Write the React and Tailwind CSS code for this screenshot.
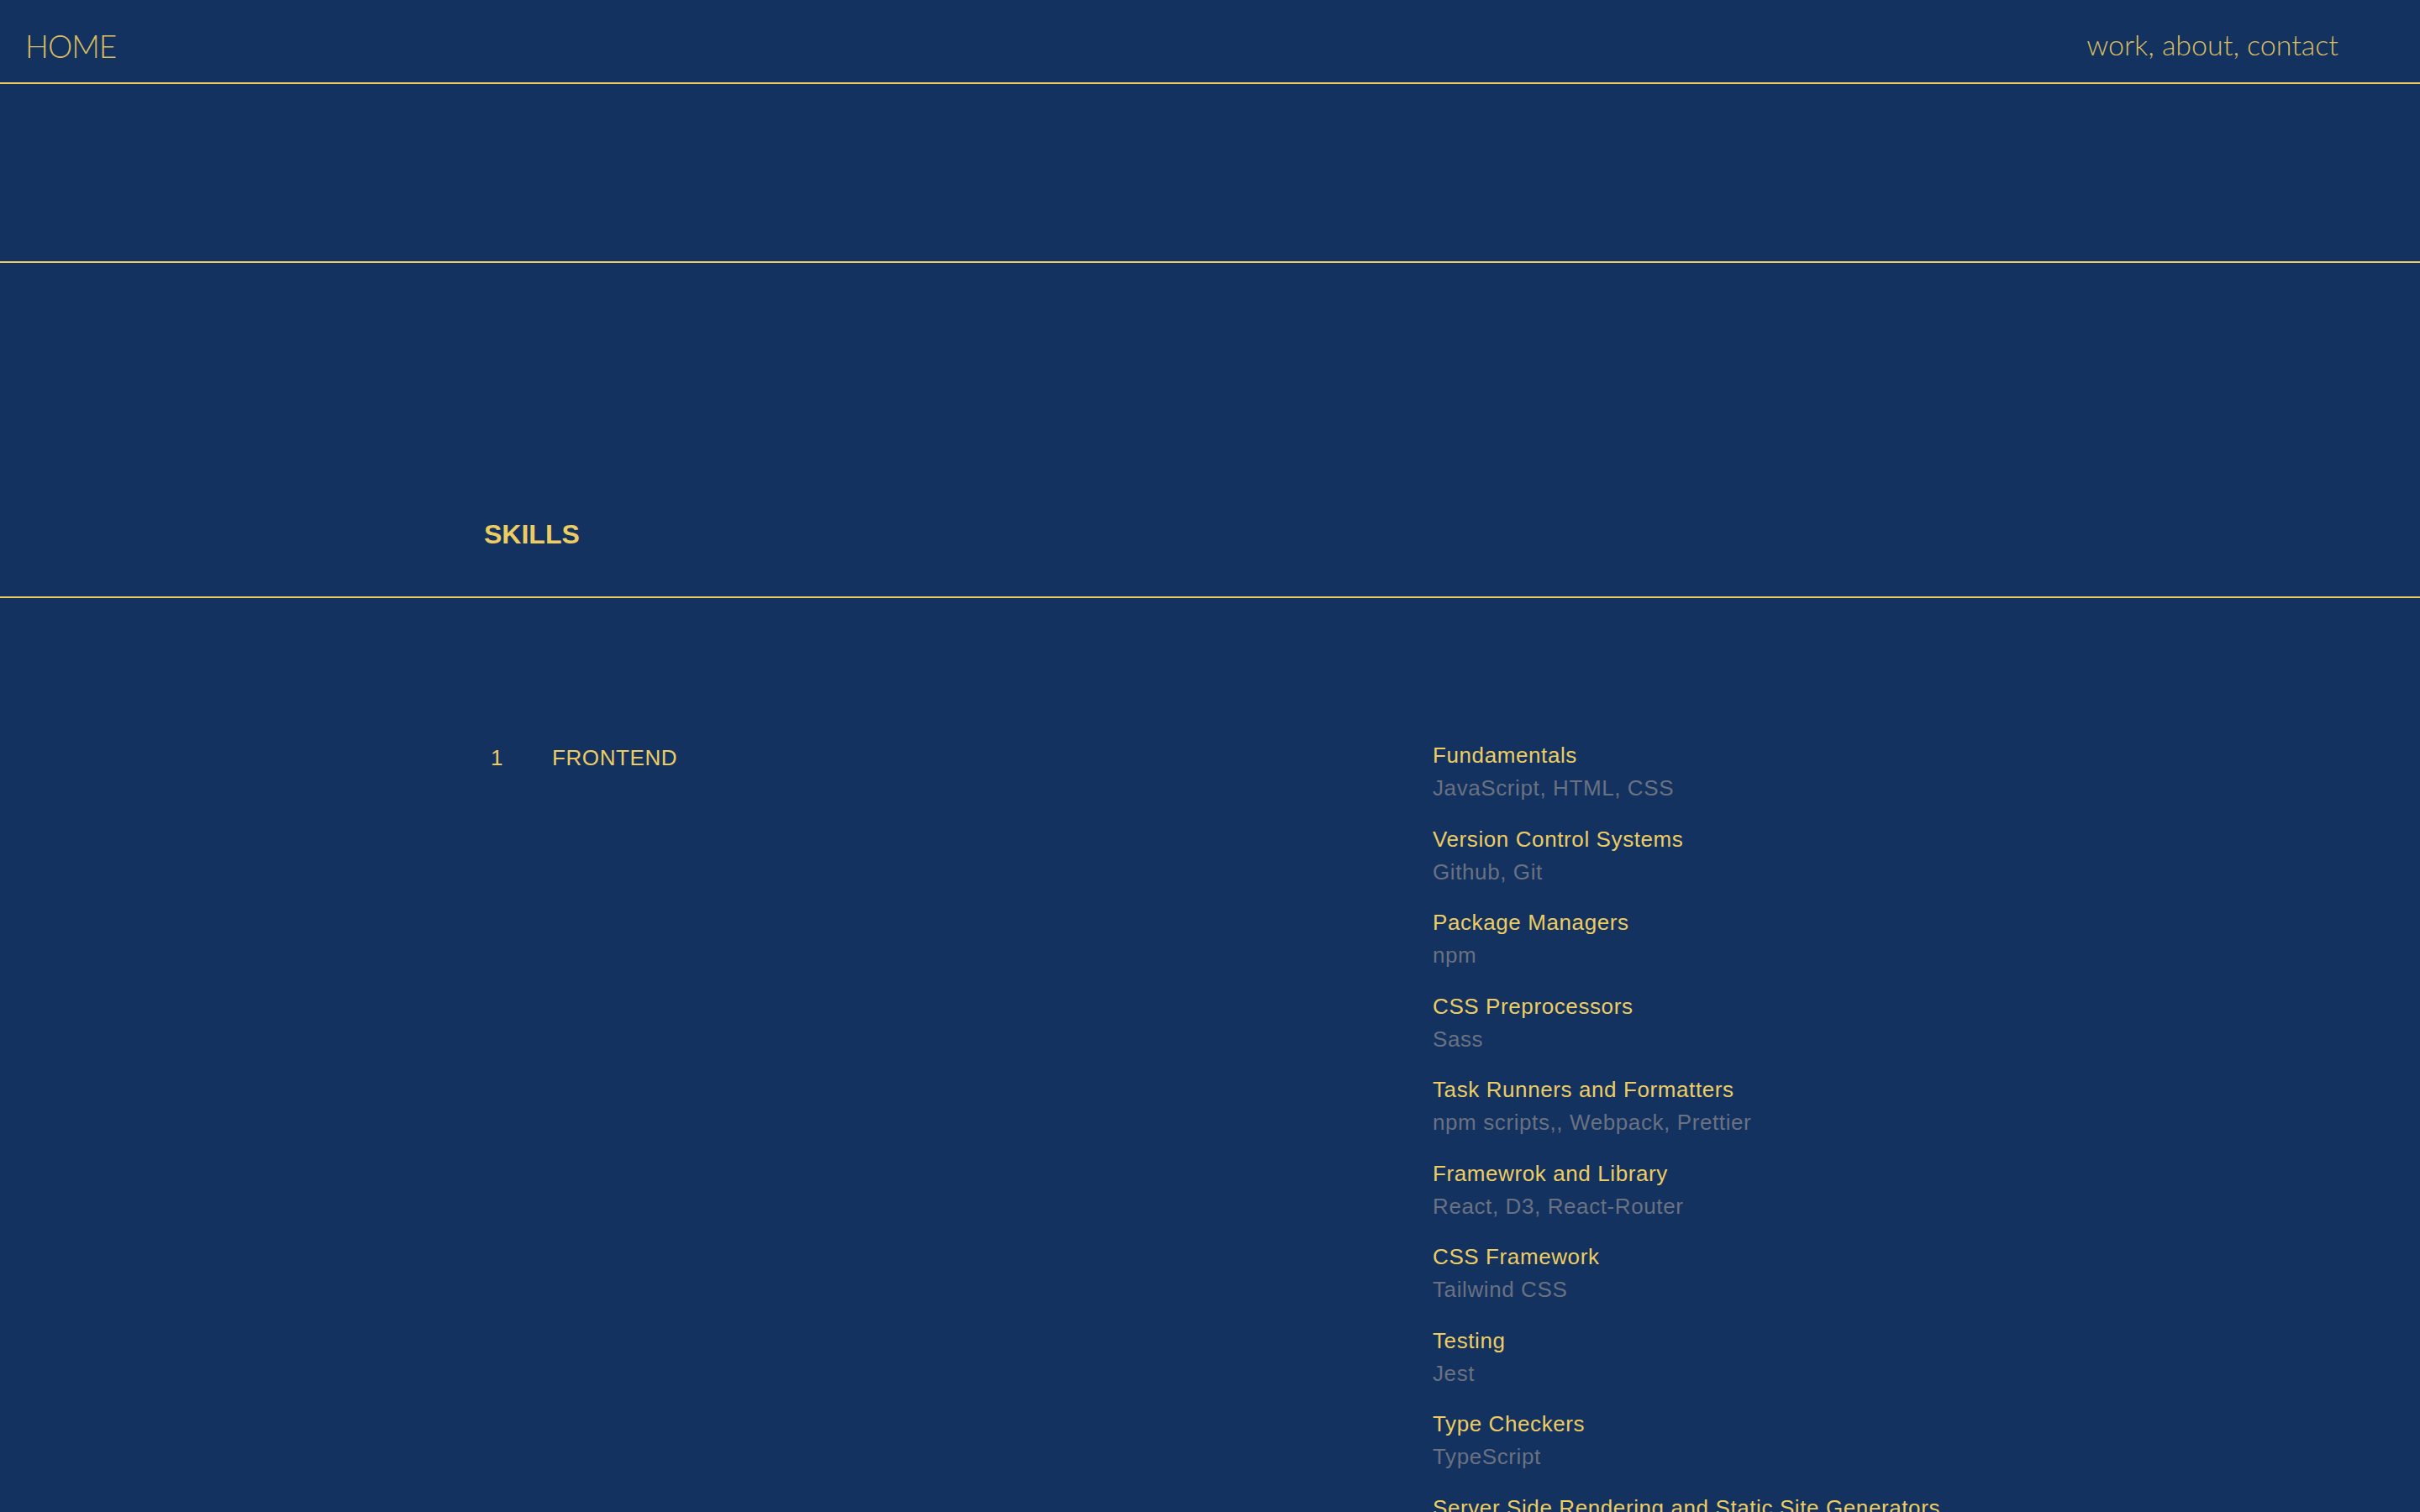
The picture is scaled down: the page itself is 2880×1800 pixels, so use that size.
import React from 'react';

const SKILLS = [
  { title: 'Fundamentals', items: 'JavaScript, HTML, CSS' },
  { title: 'Version Control Systems', items: 'Github, Git' },
  { title: 'Package Managers', items: 'npm' },
  { title: 'CSS Preprocessors', items: 'Sass' },
  { title: 'Task Runners and Formatters', items: 'npm scripts,, Webpack, Prettier' },
  { title: 'Framewrok and Library', items: 'React, D3, React-Router' },
  { title: 'CSS Framework', items: 'Tailwind CSS' },
  { title: 'Testing', items: 'Jest' },
  { title: 'Type Checkers', items: 'TypeScript' },
  { title: 'Server Side Rendering and Static Site Generators', items: 'Next.js, Gatsby' },
];

export default function App() {
  return (
    <div className="min-h-screen bg-[#133260] text-[#edcd62] font-['Liberation_Sans',Arial,sans-serif]">
      {/* Header */}
      <header className="h-[100px] flex items-start justify-between border-b-2 border-[#edcd62] pl-[30px] pr-[97px]">
        <a className="mt-[33px] text-[37px] leading-[44px] font-light font-['Lato',sans-serif] tracking-[-1px] text-[#d9bd5e]">
          HOME
        </a>
        <nav className="mt-[31px] text-[34px] leading-[44px] font-light font-['Lato',sans-serif] text-[#d9bd5e]">
          work, about, contact
        </nav>
      </header>

      {/* Empty band */}
      <div className="h-[213px] border-b-2 border-[#edcd62]" />

      {/* Section title */}
      <div className="h-[399px] flex items-end border-b-2 border-[#edcd62] pl-[576px] pb-[54px]">
        <h2 className="text-[32px] leading-[40px] font-bold">SKILLS</h2>
      </div>

      {/* Skills content */}
      <section className="flex pl-[584px] pt-[168px] pb-[120px]">
        <div className="w-[1121px] flex text-[26px] leading-[39px] tracking-[0.6px] pt-[3px]">
          <span className="w-[73px]">1</span>
          <span>FRONTEND</span>
        </div>
        <ul className="flex flex-col gap-[21.5px] text-[26px] leading-[39px] tracking-[0.6px]">
          {SKILLS.map((s) => (
            <li key={s.title}>
              <p>{s.title}</p>
              <p className="text-[#6a7180]">{s.items}</p>
            </li>
          ))}
        </ul>
      </section>
    </div>
  );
}
